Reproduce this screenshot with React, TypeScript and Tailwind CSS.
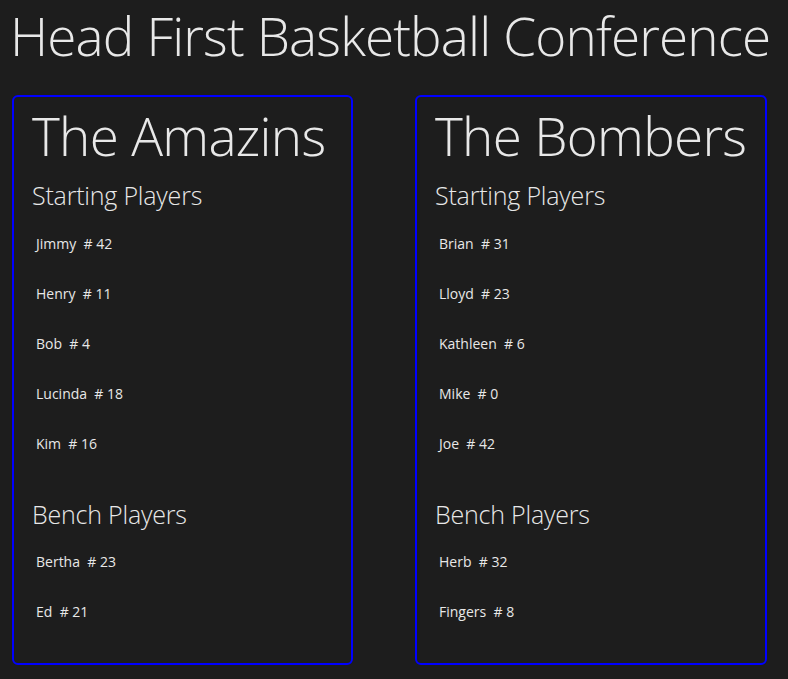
const teams = [
  {
    name: 'The Amazins',
    width: 'w-[341px]',
    starting: [
      ['Jimmy', 42],
      ['Henry', 11],
      ['Bob', 4],
      ['Lucinda', 18],
      ['Kim', 16],
    ],
    bench: [
      ['Bertha', 23],
      ['Ed', 21],
    ],
  },
  {
    name: 'The Bombers',
    width: 'w-[352px]',
    starting: [
      ['Brian', 31],
      ['Lloyd', 23],
      ['Kathleen', 6],
      ['Mike', 0],
      ['Joe', 42],
    ],
    bench: [
      ['Herb', 32],
      ['Fingers', 8],
    ],
  },
];

function PlayerRow({ name, num }: { name: string; num: number }) {
  return (
    <div className="h-[50px] flex items-center pl-[4px] text-[14px] text-[#e8e8e8] whitespace-nowrap">
      {name}&nbsp; # {num}
    </div>
  );
}

function TeamCard({ team }: { team: (typeof teams)[number] }) {
  return (
    <div className={`${team.width} h-[570px] border-2 border-[#0000ff] rounded-[6px] pl-[18px] pt-[3px]`}>
      <h2 className="text-[53px] font-light leading-[72px] tracking-[-0.7px] text-[#e8e8e8] whitespace-nowrap">{team.name}</h2>
      <h3 className="text-[25px] font-light leading-[36px] tracking-[-0.2px] text-[#e8e8e8] mt-[5px]">Starting Players</h3>
      <div className="mt-[5px]">
        {team.starting.map(([n, num]) => (
          <PlayerRow key={n as string} name={n as string} num={num as number} />
        ))}
      </div>
      <h3 className="text-[25px] font-light leading-[36px] tracking-[-0.2px] text-[#e8e8e8] mt-[28px]">Bench Players</h3>
      <div className="mt-[4px]">
        {team.bench.map(([n, num]) => (
          <PlayerRow key={n as string} name={n as string} num={num as number} />
        ))}
      </div>
    </div>
  );
}

export default function App() {
  return (
    <div className="w-[788px] h-[679px] bg-[#1d1d1d] overflow-hidden" style={{ fontFamily: '"Open Sans", "Noto Sans", sans-serif' }}>
      <h1 className="text-[53px] font-light leading-[72px] tracking-[-0.85px] text-[#e8e8e8] pl-[10px] whitespace-nowrap">
        Head First Basketball Conference
      </h1>
      <div className="flex gap-[62px] pl-[12px] mt-[23px]">
        {teams.map(t => (
          <TeamCard key={t.name} team={t} />
        ))}
      </div>
    </div>
  );
}
